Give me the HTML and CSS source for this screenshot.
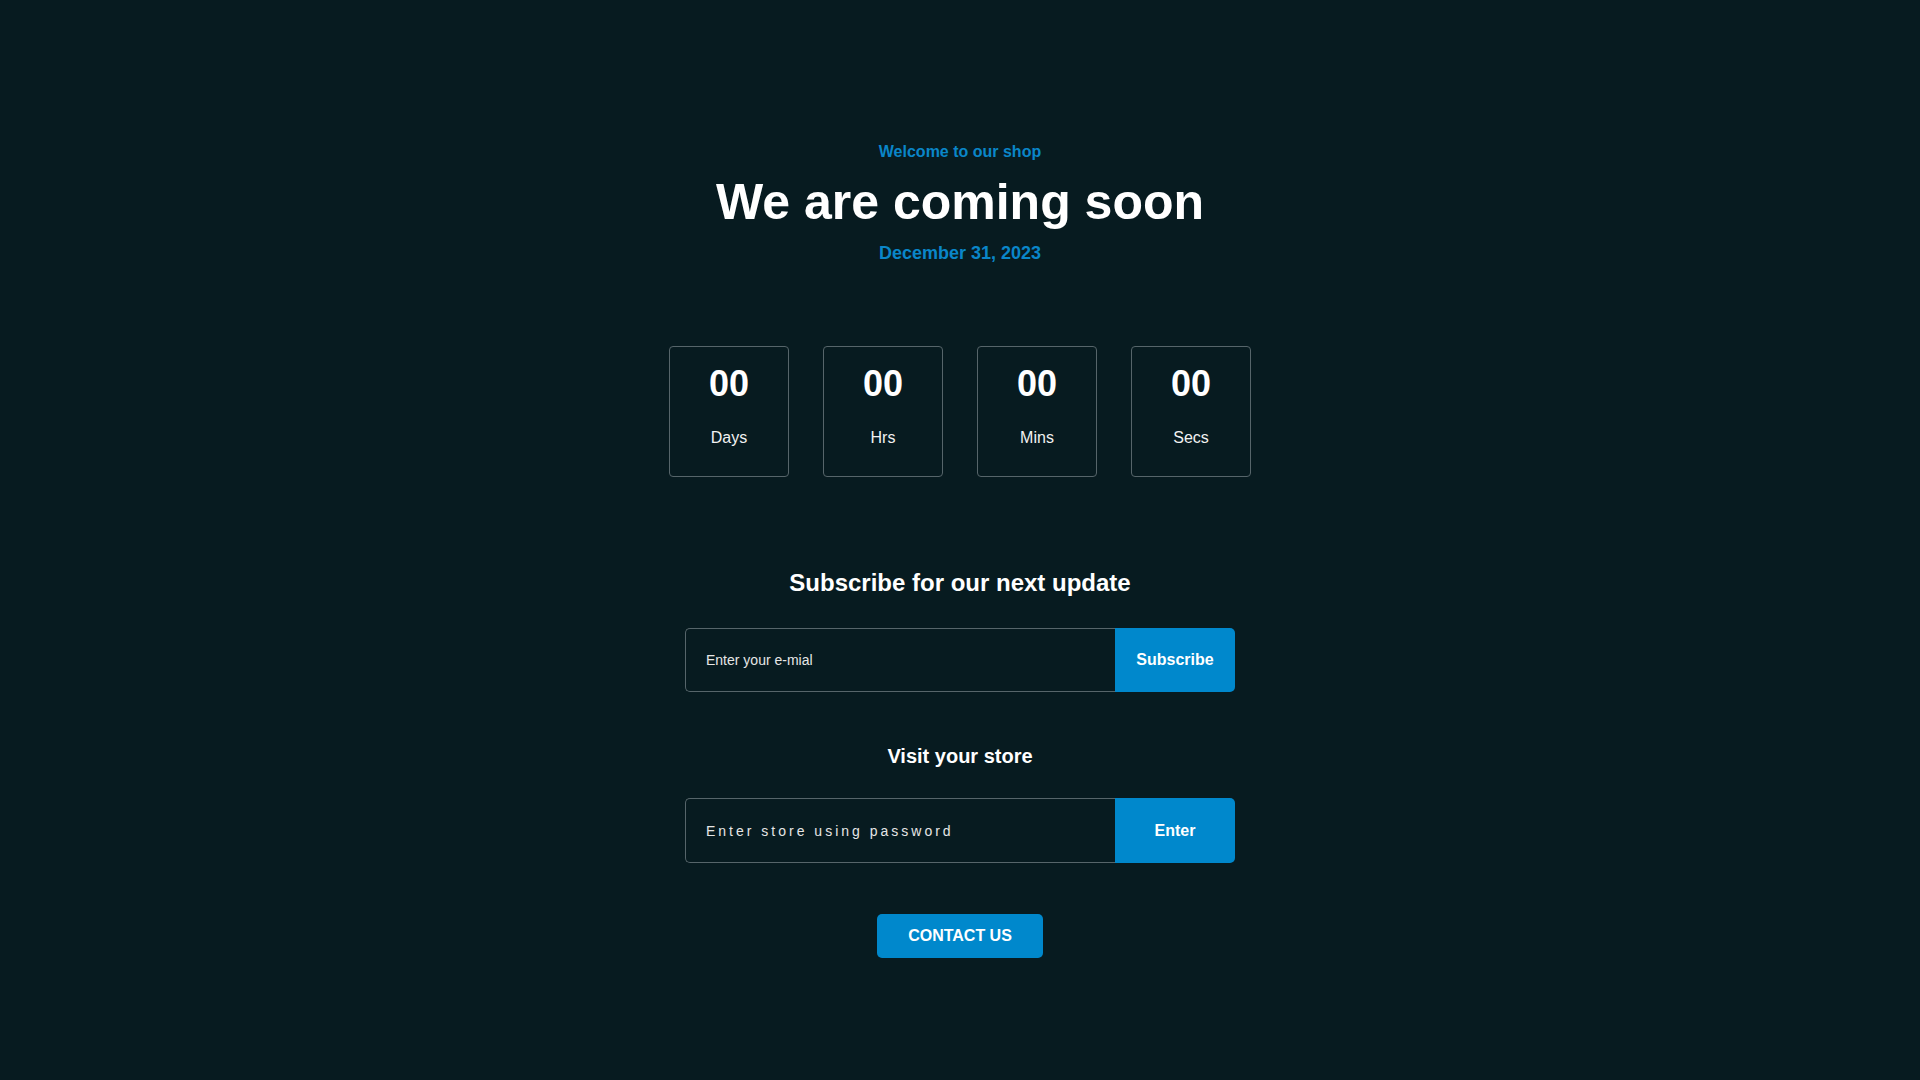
FILE: index.html
```html
<!DOCTYPE html>
<html lang="en">
<head>
<meta charset="utf-8">
<title>Coming soon</title>
<link rel="stylesheet" href="styles.css">
</head>
<body>
<main class="page">
  <p class="eyebrow">Welcome to our shop</p>
  <h1 class="title">We are coming soon</h1>
  <p class="date">December 31, 2023</p>

  <div class="countdown">
    <div class="unit"><span class="num">00</span><span class="label">Days</span></div>
    <div class="unit"><span class="num">00</span><span class="label">Hrs</span></div>
    <div class="unit"><span class="num">00</span><span class="label">Mins</span></div>
    <div class="unit"><span class="num">00</span><span class="label">Secs</span></div>
  </div>

  <h2 class="section-title subscribe-title">Subscribe for our next update</h2>
  <form class="field-group">
    <input class="field" type="email" placeholder="Enter your e-mial">
    <button class="field-btn" type="button">Subscribe</button>
  </form>

  <h3 class="section-title store-title">Visit your store</h3>
  <form class="field-group store-group">
    <input class="field field-spaced" type="password" placeholder="Enter store using password">
    <button class="field-btn" type="button">Enter</button>
  </form>

  <button class="contact" type="button">CONTACT US</button>
</main>
</body>
</html>
```

FILE: styles.css
```css
* { box-sizing: border-box; }

html, body {
  margin: 0;
  padding: 0;
  background: #071b20;
  height: 100%;
}

body {
  font-family: "Liberation Sans", Arial, sans-serif;
  color: #ffffff;
}

.page {
  display: flex;
  flex-direction: column;
  align-items: center;
  padding-top: 142px;
}

.eyebrow {
  margin: 0;
  font-size: 16px;
  line-height: 20px;
  font-weight: 700;
  color: #0a86c8;
}

.title {
  margin: 10px 0 0;
  font-size: 50px;
  line-height: 60px;
  font-weight: 700;
  color: #ffffff;
}

.date {
  margin: 10px 0 0;
  font-size: 18px;
  line-height: 22px;
  font-weight: 700;
  color: #0a86c8;
}

.countdown {
  display: flex;
  gap: 34px;
  margin-top: 82px;
}

.unit {
  width: 120px;
  height: 131px;
  border: 1px solid #56656a;
  border-radius: 4px;
  display: flex;
  flex-direction: column;
  align-items: center;
  padding-top: 15px;
}

.num {
  font-size: 36px;
  line-height: 44px;
  font-weight: 700;
}

.label {
  margin-top: 22px;
  font-size: 16px;
  line-height: 20px;
  color: #f2f2f2;
}

.section-title {
  margin: 0;
  font-weight: 700;
  color: #ffffff;
}

.subscribe-title {
  margin-top: 91px;
  font-size: 24px;
  line-height: 30px;
}

.store-title {
  margin-top: 52px;
  font-size: 20px;
  line-height: 24px;
}

.field-group {
  display: flex;
  width: 550px;
  height: 64px;
  margin: 30px 0 0;
}

.store-group {
  margin-top: 30px;
  height: 65px;
}

.field {
  flex: 1;
  min-width: 0;
  height: 100%;
  background: transparent;
  border: 1px solid #56656a;
  border-right: none;
  border-radius: 5px 0 0 5px;
  padding: 0 20px;
  font-family: "Liberation Sans", Arial, sans-serif;
  font-size: 14px;
  color: #e8e8e8;
  outline: none;
}

.field::placeholder {
  color: #e6e6e6;
  opacity: 1;
}

.field-spaced::placeholder {
  letter-spacing: 3px;
}

.field-btn {
  width: 120px;
  height: 100%;
  border: none;
  border-radius: 0 5px 5px 0;
  background: #0088cc;
  color: #ffffff;
  font-family: "Liberation Sans", Arial, sans-serif;
  font-size: 16px;
  font-weight: 700;
  cursor: pointer;
}

.contact {
  margin-top: 51px;
  width: 166px;
  height: 44px;
  border: none;
  border-radius: 5px;
  background: #0088cc;
  color: #ffffff;
  font-family: "Liberation Sans", Arial, sans-serif;
  font-size: 16px;
  font-weight: 700;
  cursor: pointer;
}
```
